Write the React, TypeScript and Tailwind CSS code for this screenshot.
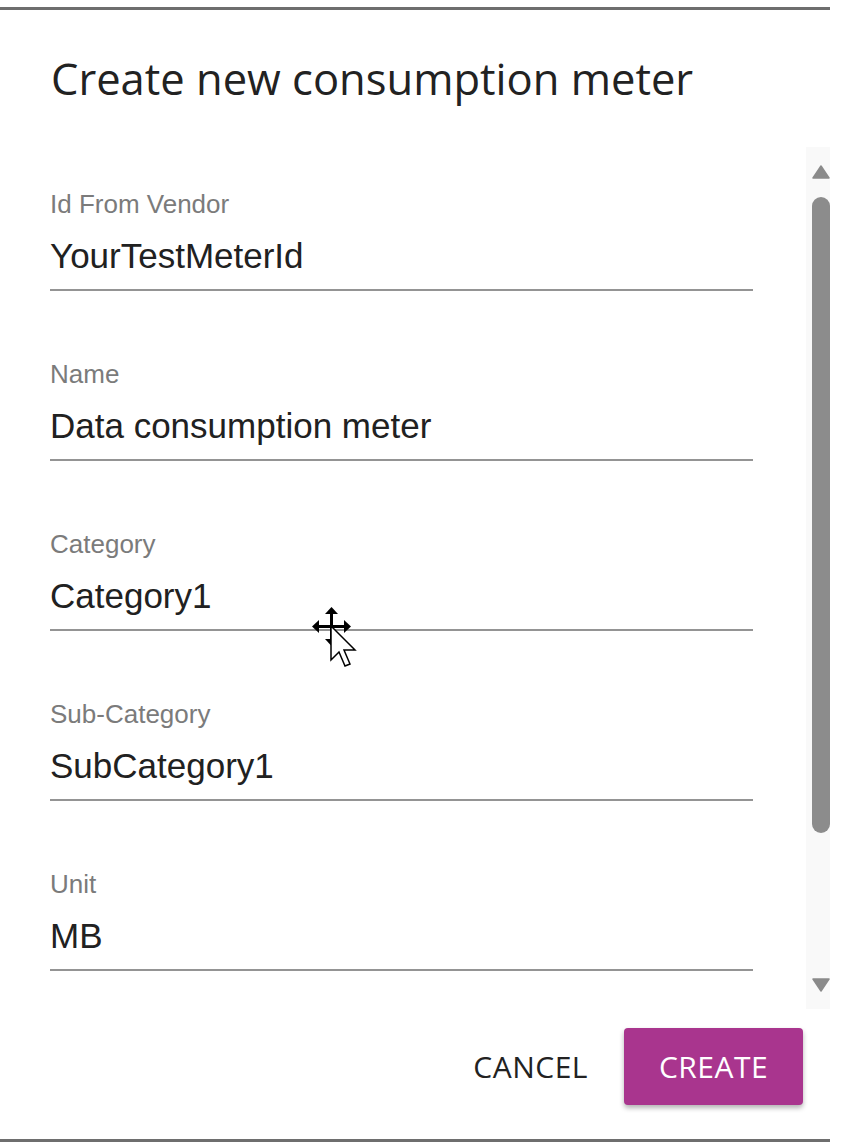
const FIELDS = [
  { label: 'Id From Vendor', value: 'YourTestMeterId' },
  { label: 'Name', value: 'Data consumption meter' },
  { label: 'Category', value: 'Category1' },
  { label: 'Sub-Category', value: 'SubCategory1' },
  { label: 'Unit', value: 'MB' },
];

function MoveCursor() {
  return (
    <svg className="pointer-events-none absolute left-[311px] top-[606px]" width="50" height="66" viewBox="0 0 50 66">
      {/* four-way move arrows */}
      <g fill="#000">
        <rect x="19" y="4" width="3" height="32" />
        <rect x="4" y="19" width="32" height="3" />
        <polygon points="20.5,1 14,8 27,8" />
        <polygon points="20.5,40 14,33 27,33" />
        <polygon points="1,20.5 8,14 8,27" />
        <polygon points="40,20.5 33,14 33,27" />
      </g>
      {/* arrow pointer */}
      <polygon
        points="20,20 20,54 28,46 34,60 39,58 33,44 44,44"
        fill="#fff"
        stroke="#000"
        strokeWidth="1.5"
        strokeLinejoin="miter"
      />
    </svg>
  );
}

function Field({ label, value }: { label: string; value: string }) {
  return (
    <div className="flex h-[170px] flex-col pt-[44px]">
      <div className="h-[26px] text-[26px] leading-[26px] text-[#7b7b7b]">{label}</div>
      <div className="mt-[19px] h-[40px] text-[35px] leading-[40px] text-[#212121]">{value}</div>
      <div className="mt-[13px] h-[2px] w-[703px] bg-[#949494]" />
    </div>
  );
}

function Scrollbar() {
  return (
    <div className="relative h-full w-[24px] bg-[#f9f9f9]">
      <svg className="absolute left-[6px] top-[18px]" width="18" height="14" viewBox="0 0 18 14">
        <polygon points="9,1 17,13 1,13" fill="#8a8a8a" stroke="#8a8a8a" strokeWidth="1.5" strokeLinejoin="round" />
      </svg>
      <div className="absolute left-[6px] top-[50px] h-[636px] w-[18px] rounded-full bg-[#8c8c8c]" />
      <svg className="absolute left-[6px] top-[831px]" width="18" height="14" viewBox="0 0 18 14">
        <polygon points="1,1 17,1 9,13" fill="#8a8a8a" stroke="#8a8a8a" strokeWidth="1.5" strokeLinejoin="round" />
      </svg>
    </div>
  );
}

export default function App() {
  return (
    <div className="relative h-[1146px] w-[853px] bg-white pt-[7px]" style={{ fontFamily: '"Liberation Sans", Arial, sans-serif' }}>
      <div className="flex h-[1135px] w-[830px] flex-col border-y-[3px] border-[#6e6e6e]">
        <div className="h-[137px] pl-[51px] pt-[42px]">
          <h1 className="text-[43.5px] font-normal leading-[54px] text-[#222]" style={{ fontFamily: '"Open Sans", sans-serif' }}>
            Create new consumption meter
          </h1>
        </div>

        <div className="flex h-[862px]">
          <div className="flex-1 overflow-hidden pl-[50px]">
            {FIELDS.map((f) => (
              <Field key={f.label} label={f.label} value={f.value} />
            ))}
          </div>
          <Scrollbar />
        </div>

        <div className="flex flex-1 items-start justify-end gap-[36px] pr-[27px] pt-[19px]" style={{ fontFamily: '"Open Sans", sans-serif' }}>
          <button className="mt-[20px] text-[30px] leading-[38px] tracking-[0.5px] text-[#222]">CANCEL</button>
          <button className="flex h-[77px] w-[179px] items-center justify-center rounded-[4px] bg-[#a9358e] text-[30px] tracking-[0.5px] text-white shadow-[0_3px_5px_rgba(0,0,0,0.3)]">
            CREATE
          </button>
        </div>
      </div>
      <MoveCursor />
    </div>
  );
}
